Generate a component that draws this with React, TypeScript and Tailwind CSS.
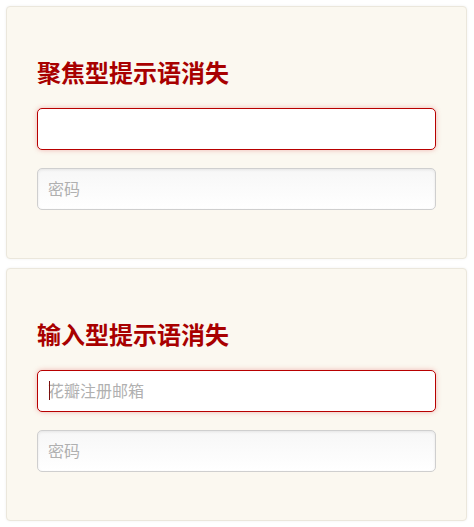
import React from "react";

const font = { fontFamily: '"Microsoft YaHei", "Noto Sans CJK SC", "Noto Sans", sans-serif' };

function Field({
  placeholder,
  focused,
  caret,
}: {
  placeholder?: string;
  focused?: boolean;
  caret?: boolean;
}) {
  return (
    <div className="relative">
      <input
        readOnly
        placeholder={placeholder}
        className={
          "block h-[42px] w-full rounded-[5px] border bg-white px-[10px] pb-[2px] text-[16px] text-[#333] outline-none placeholder:text-[#b0b0b0] " +
          (focused
            ? "border-[#b80000] shadow-[0_0_5px_rgba(220,60,60,0.35)]"
            : "border-[#cfcfcf] bg-gradient-to-b from-[#f7f7f7] to-white shadow-[inset_0_1px_3px_rgba(0,0,0,0.08)]")
        }
        style={font}
      />
      {caret && (
        <span className="absolute left-[12px] top-[11px] h-[19px] w-px bg-[#7a1010]" />
      )}
    </div>
  );
}

function Card({
  title,
  first,
  caret,
}: {
  title: string;
  first?: string;
  caret?: boolean;
}) {
  return (
    <section className="rounded-[4px] border border-[#ebe7dc] bg-[#fbf8f0] px-[30px] pb-[48px] pt-[51px] shadow-[0_0_3px_rgba(0,0,0,0.06)]">
      <h2
        className="text-[24px] font-bold leading-[28px] text-[#a80000]"
        style={font}
      >
        {title}
      </h2>
      <div className="mt-[22px] flex flex-col gap-[18px]">
        <Field placeholder={first} focused caret={caret} />
        <Field placeholder="密码" />
      </div>
    </section>
  );
}

export default function App() {
  return (
    <div className="flex min-h-[527px] w-[474px] flex-col gap-[9px] bg-white pl-[6px] pr-[7px] pt-[6px]">
      <Card title="聚焦型提示语消失" />
      <Card title="输入型提示语消失" first="花瓣注册邮箱" caret />
    </div>
  );
}
